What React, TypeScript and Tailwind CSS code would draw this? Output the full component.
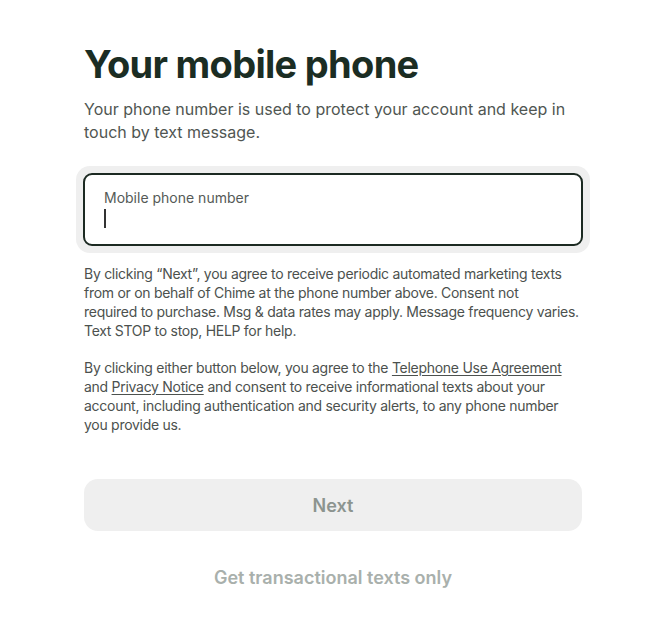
import React from "react";

export default function App() {
  return (
    <div
      className="min-h-[642px] w-full bg-white"
      style={{ fontFamily: "Inter, 'Noto Sans', sans-serif" }}
    >
      <div className="ml-[84px] w-[498px] pt-[40px]">
        <h1 className="text-[38px] font-bold leading-[48px] tracking-[-0.7px] text-[#1b2d23]">
          Your mobile phone
        </h1>
        <p className="mt-[10px] text-[16px] leading-[23px] text-[#505652]">
          Your phone number is used to protect your account and keep in touch by text message.
        </p>

        <div className="-mx-[8px] mt-[22px] rounded-[14px] bg-[#efefef] p-[7px]">
          <div className="flex h-[73px] flex-col rounded-[9px] border-2 border-[#1c2a22] bg-white px-[19px] pt-[13px]">
            <label className="text-[14px] leading-[20px] text-[#555a57]">Mobile phone number</label>
            <div className="mt-[1px] h-[19px] w-[1.5px] bg-[#333]" />
          </div>
        </div>

        <div className="w-[502px] tracking-[-0.28px] text-[14px] leading-[19px] text-[#4c514e]">
          <p className="mt-[11px]">
            By clicking “Next”, you agree to receive periodic automated marketing texts from or on behalf of Chime at the phone number above. Consent not
            <br />
            required to purchase. Msg &amp; data rates may apply. Message frequency varies. Text STOP to stop, HELP for help.
          </p>
          <p className="mt-[18px]">
            By clicking either button below, you agree to the{" "}
            <a className="underline underline-offset-2">Telephone Use Agreement</a> and{" "}
            <a className="underline underline-offset-2">Privacy Notice</a> and consent to receive informational texts about your account, including authentication and security alerts, to any phone number
            <br />
            you provide us.
          </p>
        </div>

        <button className="mt-[45px] flex h-[52px] w-full items-center justify-center rounded-[14px] bg-[#efefef] text-[18px] font-semibold text-[#8c948f]">
          Next
        </button>
        <div className="mt-[33px] text-center text-[18px] font-semibold text-[#a9b0ac]">
          Get transactional texts only
        </div>
      </div>
    </div>
  );
}
